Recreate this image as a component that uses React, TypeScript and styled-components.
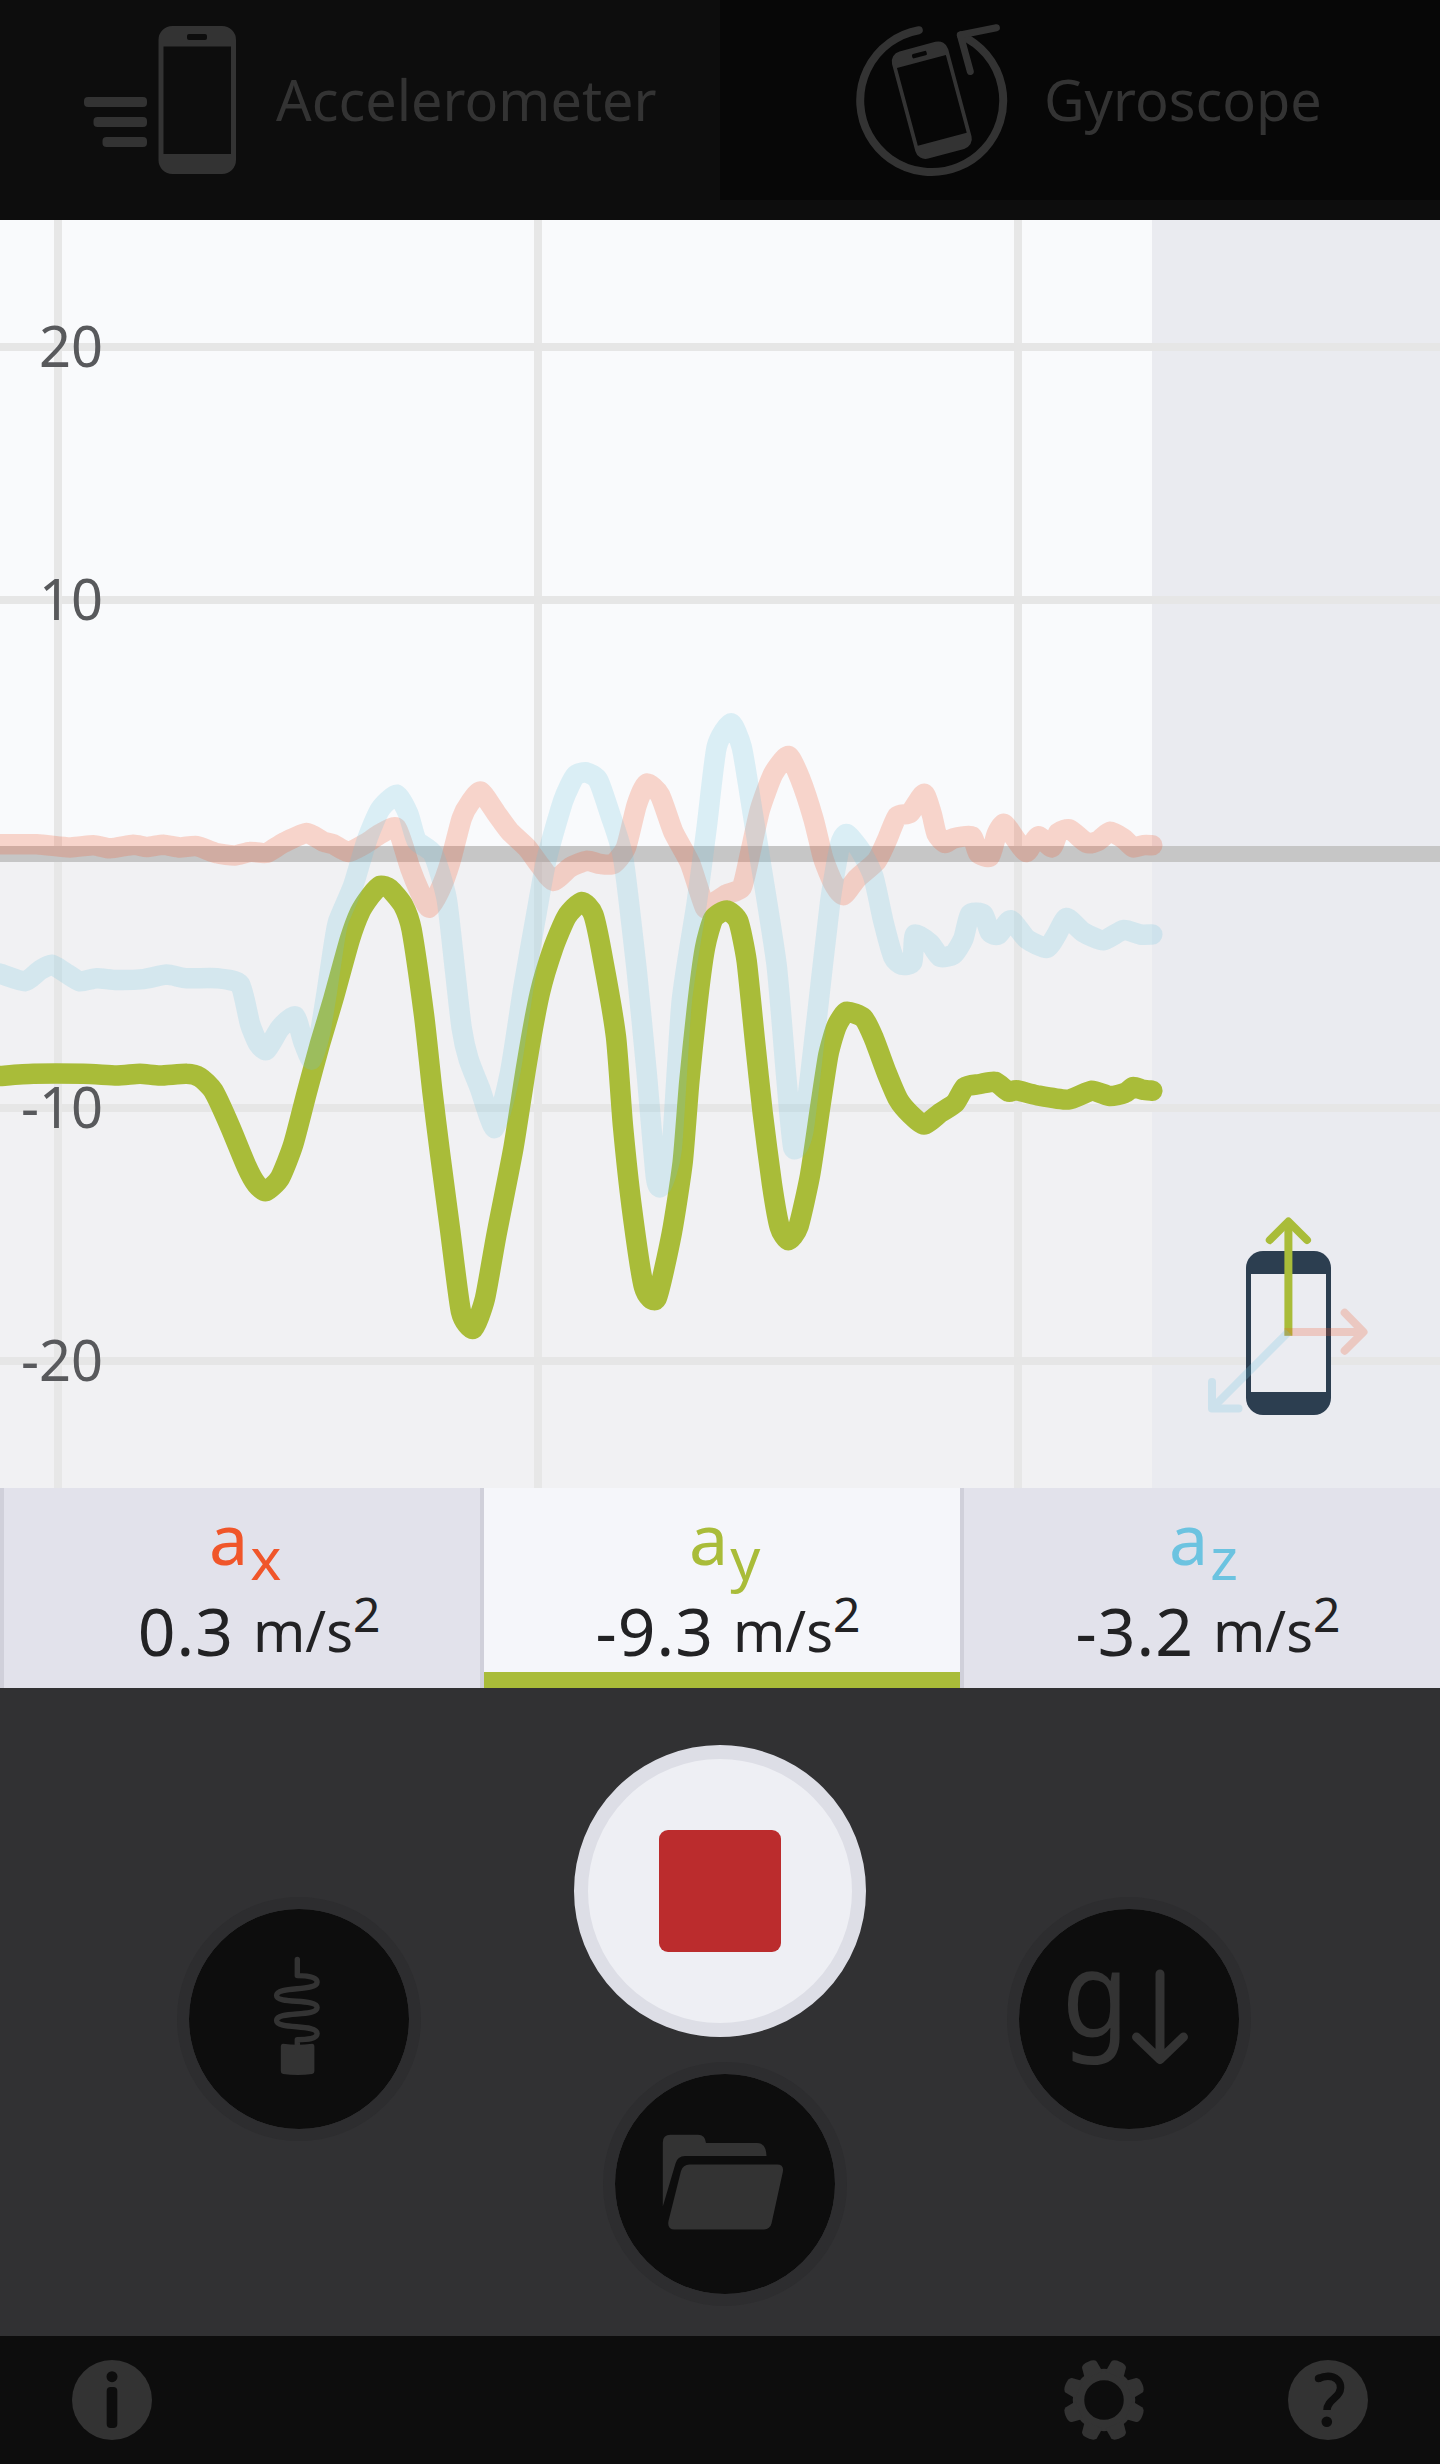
import React from "react";
import styled, { createGlobalStyle } from "styled-components";

const INK = "#333333";
const AXIS = { x: "#f0562a", y: "#a9bc39", z: "#6cc3e0" };

const GlobalStyle = createGlobalStyle`
  body {
    margin: 0;
    background: #0d0d0d;
    font-family: "Noto Sans", "Open Sans", sans-serif;
  }
`;

const Screen = styled.main`
  display: flex;
  flex-direction: column;
  width: 1440px;
  height: 2464px;
  overflow: hidden;
`;

const Tabs = styled.nav`
  display: grid;
  grid-template-columns: 1fr 1fr;
  flex: 0 0 220px;
  align-items: start;
  background: #0d0d0d;
`;

const Tab = styled.div<{ $inset: number; $gap: number; $dim?: boolean }>`
  display: flex;
  align-items: center;
  gap: ${(p) => p.$gap}px;
  height: 200px;
  padding-left: ${(p) => p.$inset}px;
  background: ${(p) => (p.$dim ? "#070707" : "transparent")};
`;

const TabLabel = styled.span`
  margin-top: -3px;
  color: ${INK};
  font-size: 55.8px;
  line-height: 76px;
`;

const Icon = styled.svg`
  display: block;
  flex: none;
`;

const Chart = styled.svg`
  display: block;
  flex: 0 0 1268px;
  width: 1440px;
`;

const TickLabel = styled.text`
  font-family: "Noto Sans", "Open Sans", sans-serif;
  font-size: 56px;
  fill: #58595c;
  text-anchor: end;
`;

const Readouts = styled.section`
  display: grid;
  grid-template-columns: repeat(3, 1fr);
  flex: 0 0 200px;
`;

const Readout = styled.div<{ $active?: boolean }>`
  box-sizing: border-box;
  height: 200px;
  border-left: 4px solid #d0d0da;
  background: ${(p) => (p.$active ? "#f5f6fa" : "#e2e2eb")};
  box-shadow: ${(p) => (p.$active ? `inset 0 -16px 0 ${AXIS.y}` : "none")};
`;

const AxisName = styled.div<{ $color: string }>`
  height: 97px;
  padding-left: 205px;
  color: ${(p) => p.$color};
  font-size: 70px;
  line-height: 100px;
`;

const Sub = styled.span`
  margin-left: 2px;
  font-size: 59px;
  line-height: 0;
  vertical-align: -15px;
`;

const Measure = styled.div`
  display: grid;
  grid-template-columns: 230px auto;
  column-gap: 19px;
  align-items: baseline;
  height: 90px;
  color: #222224;
  line-height: 90px;
`;

const Amount = styled.span`
  font-size: 66px;
  letter-spacing: 1px;
  text-align: right;
`;

const Unit = styled.span`
  position: relative;
  top: -4px;
  font-size: 56px;
`;

const Sup = styled.span`
  font-size: 48px;
  line-height: 0;
  vertical-align: 20px;
`;

const Controls = styled.section`
  box-sizing: border-box;
  display: grid;
  grid-template-columns: 244px 292px 244px;
  column-gap: 153px;
  align-items: start;
  flex: 0 0 648px;
  padding: 57px 0 0 177px;
  background: #313133;
`;

const CenterStack = styled.div`
  display: flex;
  flex-direction: column;
  align-items: center;
  gap: 25px;
`;

const RoundButton = styled.button<{ $drop?: number; $shift?: number }>`
  box-sizing: border-box;
  display: flex;
  align-items: center;
  justify-content: center;
  width: 244px;
  height: 244px;
  margin: ${(p) => p.$drop ?? 0}px 0 0 ${(p) => p.$shift ?? 0}px;
  padding: 0;
  border: 12px solid #2d2d2f;
  border-radius: 50%;
  background: #0d0d0d;
  background-clip: padding-box;
  color: ${INK};
`;

const StopButton = styled(RoundButton)`
  width: 292px;
  height: 292px;
  border: 14px solid #dddee6;
  background: #eeeff4;
`;

const StopMark = styled.span`
  width: 122px;
  height: 122px;
  border-radius: 9px;
  background: #bb2c2d;
`;

const GravityLetter = styled.span`
  flex: none;
  width: 70px;
  margin: -57px 0 0 -8px;
  font-family: "Noto Sans", sans-serif;
  font-size: 118px;
  line-height: 160px;
  text-align: left;
  transform: scaleX(0.92);
  transform-origin: left center;
`;

const Footer = styled.footer`
  box-sizing: border-box;
  display: flex;
  align-items: center;
  flex: 0 0 128px;
  gap: 144px;
  padding: 0 72px;
  background: #0d0d0d;
`;

const Spacer = styled.span`
  flex: 1;
`;

type Point = [number, number];

/* Samples are stored on a fine grid: 3 steps per pixel across, 2.24 down. */
const toPixels = (offset: number, samples: Point[]): Point[] =>
  samples.map(([x, y]) => [(offset + x) / 3, 460 + y / 2.24]);

const smooth = (pts: Point[]): string => {
  let d = `M${pts[0][0].toFixed(1)} ${pts[0][1].toFixed(1)}`;
  for (let i = 0; i < pts.length - 1; i++) {
    const a = pts[Math.max(i - 1, 0)];
    const b = pts[i];
    const c = pts[i + 1];
    const e = pts[Math.min(i + 2, pts.length - 1)];
    const k = 0.1;
    const nums = [
      b[0] + (c[0] - a[0]) * k,
      b[1] + (c[1] - a[1]) * k,
      c[0] - (e[0] - b[0]) * k,
      c[1] - (e[1] - b[1]) * k,
      c[0],
      c[1],
    ].map((n) => n.toFixed(1));
    d += `C${nums.join(" ")}`;
  }
  return d;
};

const seriesX = smooth([
  ...toPixels(0, [[-30,368],[0,368],[110,368],[210,375],[280,370],[330,377],[400,369],[440,374],[490,369],[540,375],[590,372],[650,388],[705,393],[750,385],[800,387],[850,365],[920,343],[970,362],[1000,368],[1045,385],[1100,365],[1140,345],[1190,332],[1230,420],[1260,475],[1288,510],[1320,470],[1350,410],[1385,310]]),
  ...toPixels(1380, [[30,275],[62,250],[110,300],[150,340],[200,375],[240,415],[280,450],[330,420],[380,405],[420,412],[460,412],[498,375],[530,280],[560,232],[600,258],[640,340],[690,410],[735,510],[760,500],[800,480],[845,465],[870,390],[900,290],[940,210],[985,170],[1020,220],[1060,310],[1090,400],[1120,455]]),
  ...toPixels(2460, [[70,482],[110,445],[170,405],[200,360],[232,305],[270,298],[312,255],[335,300],[350,345],[375,365],[400,355],[455,350],[475,388],[510,395],[530,345],[552,322],[590,360],[620,385],[655,350],[695,375],[715,342],[750,335],[800,365],[835,360],[870,340],[910,355],[940,375],[970,370],[997,370]]),
]);

const seriesY = smooth([
  ...toPixels(0, [[-30,888],[0,887],[100,882],[250,882],[350,886],[420,882],[480,886],[560,882],[600,890],[640,920],[690,1000],[740,1090],[770,1130],[798,1145],[840,1115],[880,1040],[920,925],[960,815],[1000,715],[1050,580],[1080,520],[1110,485],[1140,461],[1170,468],[1210,505],[1235,560],[1272,750],[1297,920],[1320,1060],[1350,1230],[1383,1415]]),
  ...toPixels(1380, [[40,1453],[75,1385],[110,1240],[160,1050],[200,860],[240,700],[280,600],[320,530],[365,497],[400,525],[430,630],[468,800],[489,1000],[515,1180],[552,1360],[590,1385],[635,1240],[668,1080],[688,900],[710,740],[735,600],[760,535],[800,516],[835,540],[860,630],[885,810],[908,970],[936,1130],[959,1225],[985,1255],[1015,1225],[1050,1110],[1080,960],[1105,840],[1130,775]]),
  ...toPixels(2460, [[80,743],[130,757],[160,800],[200,880],[235,940],[270,972],[312,996],[360,970],[405,948],[435,912],[480,905],[525,900],[565,922],[590,919],[650,930],[745,940],[815,920],[870,932],[915,925],[940,912],[970,918],[997,920]]),
]);

const seriesZ = smooth([
  ...toPixels(0, [[-30,655],[0,658],[75,675],[120,650],[155,638],[195,655],[240,675],[290,668],[350,672],[430,670],[500,660],[560,668],[650,668],[720,682],[750,770],[775,815],[800,828],[840,780],[885,753],[910,810],[935,850],[960,790],[980,700],[1000,600],[1015,540],[1060,460],[1100,360],[1140,290],[1190,257],[1225,300],[1250,360],[1300,390],[1340,490],[1365,650],[1385,780]]),
  ...toPixels(1380, [[26,850],[60,915],[105,1003],[150,880],[190,690],[230,520],[260,400],[310,270],[345,215],[380,207],[415,225],[450,300],[490,400],[530,650],[560,880],[588,1115],[605,1132],[635,1050],[665,720],[710,500],[740,330],[770,150],[813,97],[845,150],[870,260],[900,400],[950,640],[980,900],[1000,1048],[1030,1010],[1070,760],[1110,500],[1140,370]]),
  ...toPixels(2460, [[80,345],[120,380],[160,440],[190,540],[220,620],[245,638],[277,632],[285,570],[330,590],[360,620],[400,615],[430,580],[450,525],[490,525],[510,565],[535,570],[572,538],[620,580],[680,600],[710,570],[740,533],[790,565],[850,583],[910,560],[960,570],[997,570]]),
]);

const rows = [
  { y: 127, label: "20" },
  { y: 380, label: "10" },
  { y: 888, label: "-10" },
  { y: 1141, label: "-20" },
];
const columns = [58, 538, 1018];

function PhoneShape() {
  return (
    <path
      fillRule="evenodd"
      fill={INK}
      d="M14 0H63.5a14 14 0 0 1 14 14V134a14 14 0 0 1-14 14H14a14 14 0 0 1-14-14V14A14 14 0 0 1 14 0ZM5 20.5V128H72.5V20.5ZM30.500 8a2 2 0 0 0-2 2v2a2 2 0 0 0 2 2h16a2 2 0 0 0 2-2v-2a2 2 0 0 0-2-2Z"
    />
  );
}

function AccelerometerIcon() {
  return (
    <Icon width="152" height="148" viewBox="0 0 152 148">
      <rect x="0" y="71" width="63" height="10" rx="4" fill={INK} />
      <rect x="9.500" y="91" width="53.500" height="10" rx="4" fill={INK} />
      <rect x="18.500" y="111" width="44.500" height="10" rx="4" fill={INK} />
      <g transform="translate(74.5 0)">
        <PhoneShape />
      </g>
    </Icon>
  );
}

function GyroscopeIcon() {
  return (
    <Icon width="152" height="200" viewBox="856 0 152 200">
      <g fill="none" stroke={INK} strokeWidth="8" strokeLinecap="round" strokeLinejoin="round">
        <path d="M918.800 30.200A71.500 71.500 0 1 0 961 35.300" />
        <path d="M996.400 27.800L960.300 35L970.300 71.500" strokeWidth="7" />
      </g>
      <g transform="translate(931.8 100.200) rotate(-15) scale(0.75) translate(-38.750 -74)">
        <PhoneShape />
      </g>
    </Icon>
  );
}

function AxesIcon() {
  return (
    <g transform="translate(0 -220)" fill="none" strokeWidth="8" strokeLinejoin="round">
      <rect x="1246" y="1251" width="85" height="164" rx="17" fill="#2c3e50" />
      <rect x="1251" y="1274" width="75" height="118" fill="#ebecf1" />
      <g stroke={AXIS.y}>
        <path d="M1288.400 1335.700V1225" />
        <path d="M1269.800 1240L1288.400 1221.500L1307 1240" strokeLinecap="round" />
      </g>
      <g stroke={AXIS.x} opacity="0.23">
        <path d="M1284.400 1332H1362" />
        <path d="M1344.700 1312.700L1363.500 1332L1344.700 1350.700" strokeLinecap="round" />
      </g>
      <g stroke={AXIS.z} opacity="0.23">
        <path d="M1288.400 1332L1212 1408.500" />
        <path d="M1212 1382V1408.500H1238.500" strokeLinecap="round" />
      </g>
    </g>
  );
}

function AccelerationChart() {
  return (
    <Chart viewBox="0 0 1440 1268">
      <rect width="1152" height="634" fill="#f9fafc" />
      <rect y="634" width="1152" height="634" fill="#f1f1f3" />
      <rect x="1152" width="288" height="1268" fill="#eaebf0" />
      {columns.map((x) => (
        <rect key={x} x={x - 4} width="8" height="1268" fill="#e7e7e7" />
      ))}
      {rows.map((r) => (
        <rect key={r.label} y={r.y - 4} width="1440" height="8" fill="#e6e6e6" />
      ))}
      {rows.map((r) => (
        <TickLabel key={r.label} x="103" y={r.y + 20}>
          {r.label}
        </TickLabel>
      ))}
      <rect y="626" width="1440" height="16" fill="#c6c6c6" />
      <g fill="none" strokeWidth="20.500" strokeLinecap="round" strokeLinejoin="round">
        <path d={seriesX} stroke={AXIS.x} opacity="0.23" />
        <path d={seriesY} stroke={AXIS.y} />
        <path d={seriesZ} stroke={AXIS.z} opacity="0.22" />
      </g>
      <AxesIcon />
    </Chart>
  );
}

function SpringIcon() {
  return (
    <Icon width="220" height="220" viewBox="189.400 1909 220 220">
      <path
        d="M297.700 1959.500V1975.600C308 1975.600 317.500 1977 317.500 1982C317.500 1992 277 1985.500 277 1995.500C277 2004.500 317.500 1998 317.500 2007.500C317.500 2017.500 277 2010.500 277 2020.500C277 2030 317.500 2023.500 317.500 2033.500C317.500 2039 308 2039.500 297.700 2039.700V2046"
        fill="none"
        stroke={INK}
        strokeWidth="5.400"
        strokeLinecap="round"
        strokeLinejoin="round"
      />
      <path
        d="M283.500 2043.700Q298 2046 312.500 2043.700Q315 2044 314.800 2047V2071Q315 2073.500 312.500 2074Q298 2076 283.500 2074Q281 2073.500 281.200 2071V2047Q281 2044 283.500 2043.700Z"
        fill={INK}
      />
    </Icon>
  );
}

function FolderIcon() {
  return (
    <Icon width="220" height="220" viewBox="615 2074.400 220 220">
      <path
        fill={INK}
        d="M662.800 2207V2143Q662.800 2135.200 670.500 2135.200H698Q705 2135.200 706 2143.300H757Q766 2143.300 766.500 2156.500H685Q677.500 2156.500 675.500 2164Z"
      />
      <path
        fill={INK}
        d="M689.500 2165H777Q784.500 2165 782.700 2173L771.500 2224Q770 2229.800 764 2229.800H674.500Q667 2229.800 668.500 2221.500L681 2171.500Q683 2165 689.500 2165Z"
      />
    </Icon>
  );
}

function DownArrowIcon() {
  return (
    <Icon width="56" height="102" viewBox="1132 1968 56 102">
      <path
        d="M1160 1974V2058M1136.500 2037L1160 2059.500L1183.500 2037"
        fill="none"
        stroke={INK}
        strokeWidth="9"
        strokeLinecap="round"
        strokeLinejoin="round"
      />
    </Icon>
  );
}

function InfoIcon() {
  return (
    <Icon width="80" height="80" viewBox="-40 -40 80 80">
      <circle r="40" fill={INK} />
      <circle cy="-23.300" r="5.500" fill="#0d0d0d" />
      <rect x="-5.300" y="-13" width="10.600" height="41" rx="4" fill="#0d0d0d" />
    </Icon>
  );
}

function GearIcon() {
  return (
    <Icon width="80" height="80" viewBox="-40 -40 80 80">
      <circle r="25.500" fill="none" stroke={INK} strokeWidth="11.500" />
      {Array.from({ length: 8 }, (_, i) => (
        <path
          key={i}
          transform={`rotate(${22.5 + i * 45})`}
          d="M-9.500 -27L-8 -38Q-7 -41.500 0 -41.500Q7 -41.500 8 -38L9.500 -27Z"
          fill={INK}
        />
      ))}
    </Icon>
  );
}

function HelpIcon() {
  return (
    <Icon width="80" height="80" viewBox="-40 -40 80 80">
      <circle r="40" fill={INK} />
      <path
        d="M-9.500 -21.500C-4 -24 1 -24.200 5 -23C12 -20.500 14.500 -13.500 11 -7C8 -1.500 -1 1.500 -1 10"
        fill="none"
        stroke="#0d0d0d"
        strokeWidth="7.500"
      />
      <circle cx="-9.500" cy="-21.500" r="3.700" fill="#0d0d0d" />
      <circle cx="-1.200" cy="21.700" r="5.300" fill="#0d0d0d" />
    </Icon>
  );
}

const axes = [
  { sub: "x", value: "0.3", color: AXIS.x },
  { sub: "y", value: "-9.3", color: AXIS.y, active: true },
  { sub: "z", value: "-3.2", color: AXIS.z },
];

export default function App() {
  return (
    <Screen>
      <GlobalStyle />
      <Tabs>
        <Tab $inset={84} $gap={40}>
          <AccelerometerIcon />
          <TabLabel>Accelerometer</TabLabel>
        </Tab>
        <Tab $inset={136} $gap={36} $dim>
          <GyroscopeIcon />
          <TabLabel>Gyroscope</TabLabel>
        </Tab>
      </Tabs>
      <AccelerationChart />
      <Readouts>
        {axes.map((a) => (
          <Readout key={a.sub} $active={a.active}>
            <AxisName $color={a.color}>
              a<Sub>{a.sub}</Sub>
            </AxisName>
            <Measure>
              <Amount>{a.value}</Amount>
              <Unit>
                m/s<Sup>2</Sup>
              </Unit>
            </Measure>
          </Readout>
        ))}
      </Readouts>
      <Controls>
        <RoundButton $drop={152}>
          <SpringIcon />
        </RoundButton>
        <CenterStack>
          <StopButton>
            <StopMark />
          </StopButton>
          <RoundButton $shift={10}>
            <FolderIcon />
          </RoundButton>
        </CenterStack>
        <RoundButton $drop={152} $shift={-12}>
          <GravityLetter>g</GravityLetter>
          <DownArrowIcon />
        </RoundButton>
      </Controls>
      <Footer>
        <InfoIcon />
        <Spacer />
        <GearIcon />
        <HelpIcon />
      </Footer>
    </Screen>
  );
}
